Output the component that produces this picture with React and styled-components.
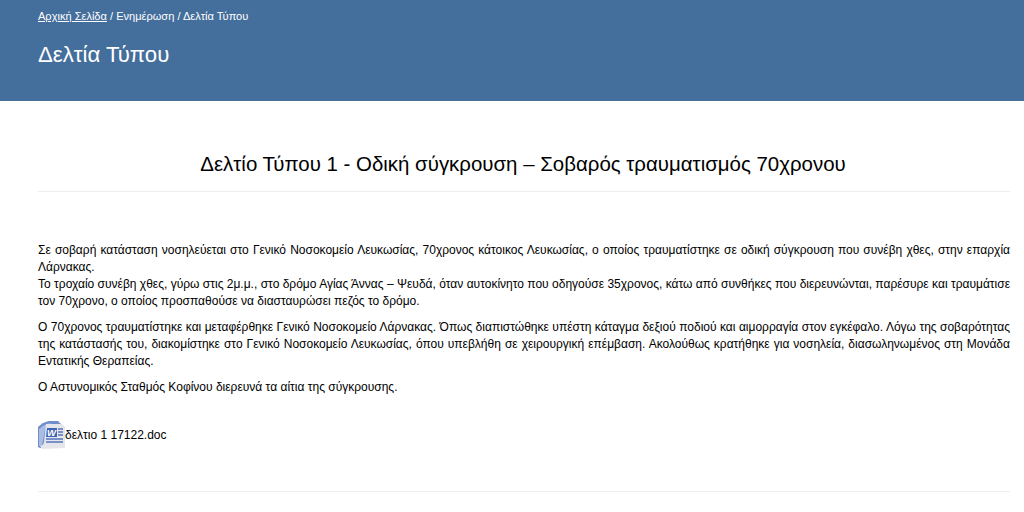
import styled, { createGlobalStyle } from 'styled-components';

const Global = createGlobalStyle`
    html, body {
        margin: 0;
        padding: 0;
        background: #fff;
        overflow: hidden;
    }
    body {
        font-family: "Liberation Sans", Arial, sans-serif;
        font-size: 12px;
        line-height: 17px;
        color: #000;
    }
`;

const Banner = styled.header`
    background-color: #446e9b;
    height: 101px;
    box-sizing: border-box;
    padding: 8px 38px 0;
    color: #fff;
`;

const Crumbs = styled.div`
    font-size: 11.05px;
    line-height: 17px;

    a {
        color: #fff;
        text-decoration: underline;
    }
`;

const PageTitle = styled.h1`
    margin: 17px 0 0;
    font-size: 22.2px;
    line-height: 26px;
    font-weight: 400;
`;

const Main = styled.main`
    padding: 0 14px 0 38px;
`;

const ArticleHead = styled.div`
    padding: 50px 2px 14px 0;
    border-bottom: 1px solid #eee;
    text-align: center;
`;

const ArticleTitle = styled.h2`
    margin: 0;
    font-size: 20.45px;
    line-height: 26px;
    font-weight: 400;
`;

const Body = styled.div`
    padding-top: 50px;
`;

const Para = styled.p`
    margin: 0 0 9px;
    text-align: justify;
`;

const Attachment = styled.div`
    display: flex;
    align-items: flex-start;
    margin-top: 25px;
    padding-bottom: 42px;
    border-bottom: 1px solid #eee;
`;

const DocName = styled.a`
    margin-top: 6px;
    color: #000;
    text-decoration: none;
`;

function WordIcon() {
    return (
        <svg width="27" height="28" viewBox="0 0 27 28">
            <path d="M0 6 C3 3 6 1 11 0 H20 L23 3 V25 L2 27 L0 26 Z" fill="#6f8fcc" />
            <path d="M1 8 C4 5 8 3 13 2 L7 9 L4 25 H1 Z" fill="#a9bde3" />
            <path d="M8 3 H24 L27 6 V27 L4 28 L2 25 C4 25 6 23 6 21 Z" fill="#e4e6ec" />
            <path d="M9 7 H19 V16 H8 Z" fill="#3f64b3" />
            <text x="9" y="15" fontSize="9.5" fontWeight="700" fontStyle="italic" fontFamily="Liberation Sans" fill="#fff">W</text>
            <path d="M20 8 H25 M20 11 H25 M20 14 H25 M8 18 H25 M8 21 H25" stroke="#5477bd" strokeWidth="1.3" />
        </svg>
    );
}

export default function App() {
    return (
        <>
            <Global />
            <Banner>
                <Crumbs>
                    <a href="#home">Αρχική Σελίδα</a> / Ενημέρωση / Δελτία Τύπου
                </Crumbs>
                <PageTitle>Δελτία Τύπου</PageTitle>
            </Banner>
            <Main>
                <ArticleHead>
                    <ArticleTitle>Δελτίο Τύπου 1 - Οδική σύγκρουση – Σοβαρός τραυματισμός 70χρονου</ArticleTitle>
                </ArticleHead>
                <Body>
                    <Para>
                        Σε σοβαρή κατάσταση νοσηλεύεται στο Γενικό Νοσοκομείο Λευκωσίας, 70χρονος κάτοικος Λευκωσίας, ο οποίος τραυματίστηκε σε οδική σύγκρουση που συνέβη χθες, στην επαρχία Λάρνακας.
                        <br />
                        Το τροχαίο συνέβη χθες, γύρω στις 2μ.μ., στο δρόμο Αγίας Άννας – Ψευδά, όταν αυτοκίνητο που οδηγούσε 35χρονος, κάτω από συνθήκες που διερευνώνται, παρέσυρε και τραυμάτισε τον 70χρονο, ο οποίος προσπαθούσε να διασταυρώσει πεζός το δρόμο.
                    </Para>
                    <Para>
                        Ο 70χρονος τραυματίστηκε και μεταφέρθηκε Γενικό Νοσοκομείο Λάρνακας. Όπως διαπιστώθηκε υπέστη κάταγμα δεξιού ποδιού και αιμορραγία στον εγκέφαλο. Λόγω της σοβαρότητας της κατάστασής του, διακομίστηκε στο Γενικό Νοσοκομείο Λευκωσίας, όπου υπεβλήθη σε χειρουργική επέμβαση. Ακολούθως κρατήθηκε για νοσηλεία, διασωληνωμένος στη Μονάδα Εντατικής Θεραπείας.
                    </Para>
                    <Para>Ο Αστυνομικός Σταθμός Κοφίνου διερευνά τα αίτια της σύγκρουσης.</Para>
                    <Attachment>
                        <WordIcon />
                        <DocName href="#doc">δελτιο 1 17122.doc</DocName>
                    </Attachment>
                </Body>
            </Main>
        </>
    );
}
